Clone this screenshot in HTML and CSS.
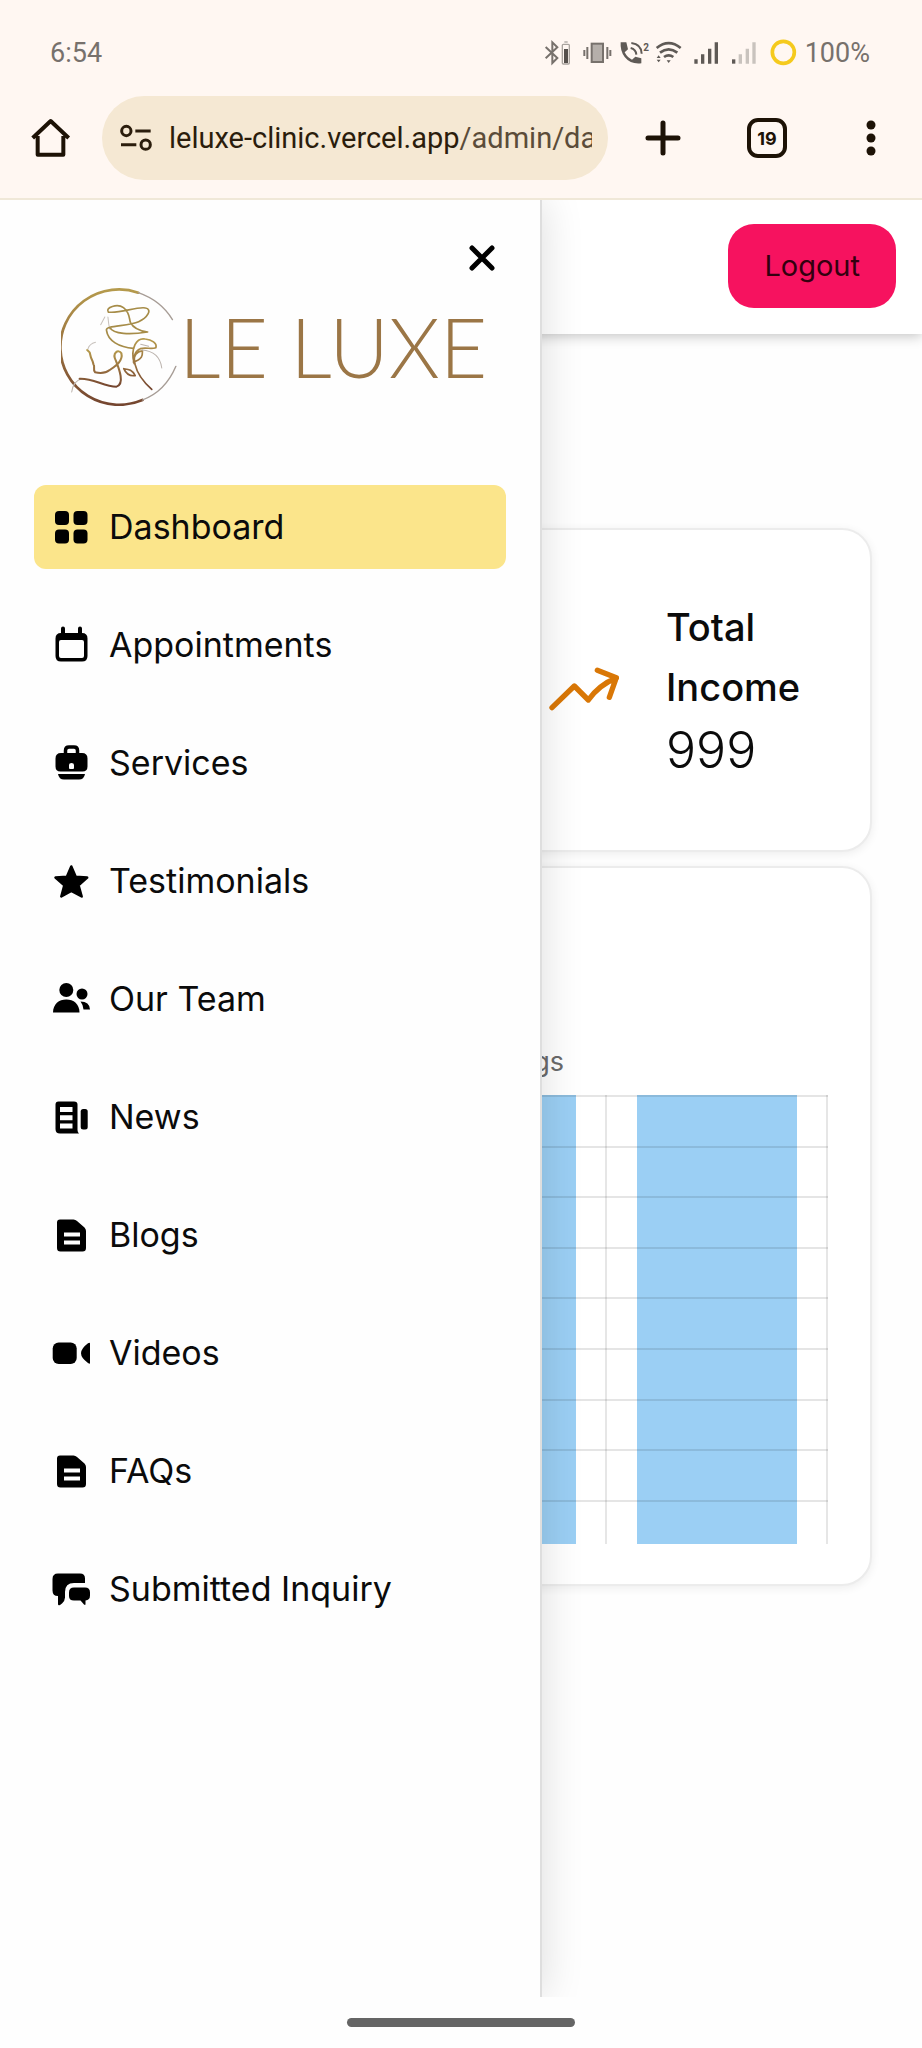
FILE: index.html
```html
<!DOCTYPE html>
<html lang="en">
<head>
<meta charset="utf-8">
<meta name="viewport" content="width=device-width, initial-scale=1">
<title>Le Luxe Clinic Admin</title>
<link rel="stylesheet" href="styles.css">
</head>
<body>
<div class="screen">
  <header class="chrome">
    <div class="status">
      <span class="clock">6:54</span>
      <div class="indicators">
        <svg width="32" height="28" viewBox="243 117 96 84" fill="none" stroke="#77716c" stroke-width="6"><path d="M251 141l35 33-15 15v-62l15 15-35 33"/><rect x="301" y="133" width="21" height="59" rx="3" stroke="#a9a39e" stroke-width="4"/><path d="M307 126h10" stroke="#c6c0bb"/><path d="M312 147v42" stroke="#55504c" stroke-width="12"/></svg>
        <svg width="36" height="28" viewBox="351 117 108 84" fill="none" stroke="#77716c" stroke-width="6"><rect x="389" y="131" width="34" height="55" fill="#b5afaa"/><path d="M376 141v36M367 150v18M436 141v36M445 150v18"/></svg>
        <svg width="32" height="28" viewBox="471 117 96 84"><path fill="#5f5a56" d="M476 127h17l5 21-10 9q8 16 22 22l10-9 18 5v15q-32 4-50-19-14-18-12-44z"/><path d="M506 144q16 4 17 20M508 129q30 3 31 32" fill="none" stroke="#5f5a56" stroke-width="6"/><text class="badge" x="544" y="153">2</text></svg>
        <svg width="30" height="28" viewBox="579 117 90 84" fill="none" stroke="#5f5a56" stroke-width="8"><path d="M584 144q36-29 72 0M594 158q26-20 52 0M606 171q14-10 28 0"/><path d="M614 181h12l-6 8z" fill="#5f5a56" stroke="none"/><path d="M584 174l6-8 6 8zM584 179l6 8 6-8z" fill="#5f5a56" stroke="none"/></svg>
        <svg width="34" height="28" viewBox="681 117 102 84" fill="none" stroke="#5f5a56" stroke-width="10"><path d="M702 178v13M722 163v28M743 146v45M763 127v64"/></svg>
        <svg width="36" height="28" viewBox="795 117 108 84" fill="none" stroke="#c9c3be" stroke-width="10"><path d="M815 178v13" stroke="#5f5a56"/><path d="M835 163v28M856 146v45M876 127v64"/></svg>
        <svg width="34" height="28" viewBox="915 117 102 84" fill="none"><circle cx="964" cy="157" r="33" stroke="#f5ca1d" stroke-width="11"/></svg>
        <span class="percent">100%</span>
      </div>
    </div>
    <div class="toolbar">
      <button class="tool" aria-label="Home"><svg width="40" height="40" viewBox="93 356 120 120" fill="none" stroke="#1d1206" stroke-width="12" stroke-linejoin="round"><path d="M113 410v56h77v-56M98 416l54-51 54 51"/></svg></button>
      <div class="address">
        <svg width="36" height="32" viewBox="352 366 108 96" fill="none" stroke="#2b1d0c" stroke-width="9"><circle cx="377" cy="393" r="14"/><path d="M404 393h46M361 434h46"/><circle cx="435" cy="434" r="14"/></svg>
        <span class="url">leluxe-clinic.vercel.app<span class="path">/admin/dashboard</span></span>
      </div>
      <div class="actions">
        <button class="tool" aria-label="New tab"><svg width="40" height="40" viewBox="0 0 40 40" stroke="#1d1206" stroke-width="5" stroke-linecap="round"><path d="M20 5v30M5 20h30"/></svg></button>
        <button class="tool tabs" aria-label="Open tabs">19</button>
        <button class="tool" aria-label="Menu"><svg width="40" height="40" viewBox="0 0 40 40" fill="#1d1206"><circle cx="20" cy="7" r="4.500"/><circle cx="20" cy="20" r="4.500"/><circle cx="20" cy="33" r="4.500"/></svg></button>
      </div>
    </div>
  </header>

  <div class="viewport">
    <div class="topbar"><button class="logout">Logout</button></div>
    <main class="content">
      <section class="card stat">
        <svg width="74" height="50" viewBox="87 470 222 150" fill="none" stroke="#d97706" stroke-width="16" stroke-linejoin="round" stroke-linecap="round"><path d="M99 598l67-65 42 42q33-46 84-66M235 486l57 22-21 59"/></svg>
        <div class="figures">
          <h2 class="stat-title">Total Income</h2>
          <p class="stat-value">999</p>
        </div>
      </section>
      <section class="card chart">
        <p class="legend">gs</p>
        <div class="plot">
          <div class="category"><div class="bar"></div></div>
          <div class="category"><div class="bar"></div></div>
          <div class="category"><div class="bar"></div></div>
        </div>
      </section>
    </main>

    <aside class="drawer">
      <button class="close" aria-label="Close menu"><svg width="32" height="32" viewBox="0 0 32 32" stroke="#000" stroke-width="5" stroke-linecap="round"><path d="M6 6l20 20M26 6L6 26"/></svg></button>
      <div class="brand">
        <svg class="emblem" width="118" height="120" viewBox="174 255 342 360" preserveAspectRatio="none" fill="none" stroke-linecap="round" stroke-linejoin="round">
          <defs><linearGradient id="gold" x1="0" y1="0" x2="0" y2="1"><stop offset="0" stop-color="#b59a4c"/><stop offset=".5" stop-color="#9a7240"/><stop offset="1" stop-color="#74452f"/></linearGradient></defs>
          <path d="M398 275A170 173 0 1 0 410 597" stroke="url(#gold)" stroke-width="8"/>
          <path d="M398 275q66 24 99 81M410 597q66-25 97-101" stroke="#a79d96" stroke-width="4"/>
          <path d="M205 573q4-34 30-40" stroke="#bdb5af" stroke-width="3"/>
          <path d="M228 533c40-2 70 24 107 24 24-8 8-52-2-78-12-24 8-36 16-22 6 24-20 40-34 50-12 10-27 11-42 7-8-9 1-17-5-24l-2-8-5-12-4-16-7-7" stroke="url(#gold)" stroke-width="6"/>
          <path d="M252 444q4-15 22-20M289 371l12-23M310 348q2 22 5 36" stroke="#c9c3be" stroke-width="3"/>
          <path d="M311 333c-10-14 27-26 44-13 18 14 16 30 20 44 10 20 28 26 50 29-50 8-100 7-109-13M311 333c30 6 86-18 108-12 21 4 5 30-20 41-32 15-99 10-93 27 4 30 36 50 78 53" stroke="#a68c48" stroke-width="5"/>
          <path d="M386 488c-12-48 8-79 32-74 19 2 35 13 31 26-14 6-28-2-45 3-30 13-22 72 33 122M384 483c28-9 26-22 26-34-18 4-24 14-26 34zM389 524c-8-18-18-19-33-21 7 17 18 23 33 21z" stroke="url(#gold)" stroke-width="5"/>
          <path d="M408 447q52 4 58 54M405 430l23 6" stroke="#bdb5af" stroke-width="3"/>
        </svg>
        <span class="wordmark">LE LUXE</span>
      </div>
      <nav class="menu">
        <a class="item active" href="#dashboard"><svg class="icon" viewBox="0 0 40 40"><rect x="4" y="4" width="14" height="14" rx="4"/><rect x="22.500" y="4" width="14" height="14" rx="4"/><rect x="4" y="22.500" width="14" height="14" rx="4"/><rect x="22.500" y="22.500" width="14" height="14" rx="4"/></svg>Dashboard</a>
        <a class="item" href="#appointments"><svg class="icon" viewBox="0 0 40 40"><path fill-rule="evenodd" d="M10 3.500a2 2 0 0 1 4 0V8h13V3.500a2 2 0 0 1 4 0V8q5.500 0 5.500 5.500v17.500q0 5.500-5.500 5.500H10q-5.500 0-5.500-5.500V13.500Q4.500 8 10 8zM8 17v14q0 2 2 2h21q2 0 2-2V17q0-2-2-2H10q-2 0-2 2z"/></svg>Appointments</a>
        <a class="item" href="#services"><svg class="icon" viewBox="0 0 40 40"><path d="M14.500 12V7.500q0-3.500 3.500-3.500h5q3.500 0 3.500 3.500V12" fill="none" stroke="#000" stroke-width="3.500"/><path fill-rule="evenodd" d="M10 10h21q5.500 0 5.500 5.500v8q0 5-5 5h-22q-5 0-5-5v-8Q4.500 10 10 10zM18 22v3q0 1 1 1h3q1 0 1-1v-3q0-2-2.500-2T18 22z"/><path d="M7 31h27q-1 5.500-6 5.500H13q-5 0-6-5.500z"/></svg>Services</a>
        <a class="item" href="#testimonials"><svg class="icon" viewBox="0 0 40 40"><path stroke="#000" stroke-width="2.500" stroke-linejoin="round" d="M20.300 5.500l4.400 10.300 11.500.8-8.700 7.600 3.200 11.300-10.400-5.700-10 5.700 3-11.300-8.800-7.600 11.400-.8z"/></svg>Testimonials</a>
        <a class="item" href="#team"><svg class="icon" viewBox="0 0 40 40"><circle cx="15.300" cy="11" r="7"/><path d="M2 33.500C2 25 8 20.500 15.300 20.500S28.500 25 28.500 33.500z"/><circle cx="31" cy="15" r="5.500"/><path d="M29.500 22.500q9 0 9.500 8h-6.500q-.5-5-3-8z"/></svg>Our Team</a>
        <a class="item" href="#news"><svg class="icon" viewBox="0 0 40 40"><path fill-rule="evenodd" d="M7.500 4.500H23q3.500 0 3.500 3V33q0 2 1.500 3.500H9q-4.500 0-4.500-4.500V7.500q0-3 3-3zM9 10v5h12.500v-5zM9 18.300v5h12.500v-5zM9 26.600v5h12.500v-5z"/><rect x="29.700" y="12" width="7" height="20.500" rx="2.500"/></svg>News</a>
        <a class="item" href="#blogs"><svg class="icon" viewBox="0 0 40 40"><path fill-rule="evenodd" d="M9 4.500h13.500q2 0 3.500 1.500l7.500 6.500q1.500 1.500 1.500 3.500V33q0 3.500-3.500 3.500H9.500Q6 36.500 6 33V7.500q0-3 3-3zM13 17.500v4h16v-4zM13 25.500v4h16v-4z"/></svg>Blogs</a>
        <a class="item" href="#videos"><svg class="icon" viewBox="0 0 40 40"><rect x="1.700" y="9.500" width="24" height="21.500" rx="6"/><path d="M39 10.500v19.500q0 1.500-2 0-7-5-7-9.700t7-10q2-1.300 2 .2z"/></svg>Videos</a>
        <a class="item" href="#faqs"><svg class="icon" viewBox="0 0 40 40"><path fill-rule="evenodd" d="M9 4.500h13.500q2 0 3.500 1.500l7.500 6.500q1.500 1.500 1.500 3.500V33q0 3.500-3.500 3.500H9.500Q6 36.500 6 33V7.500q0-3 3-3zM13 17.500v4h16v-4zM13 25.500v4h16v-4z"/></svg>FAQs</a>
        <a class="item" href="#inquiry"><svg class="icon" viewBox="0 0 40 40"><path d="M7 4.500h22q5 0 5 5V14H23q-9 0-9 9v5.500q0 3-3 6l-2 1.500q-2 1-2-1V27q-5.500 0-5.500-5.500V10q0-5.500 5.500-5.500z"/><path d="M23 18.500h11q5 0 5 5v3q0 4.500-4.500 5V35q0 1.500-1.500.5L29.500 31.500H23q-5 0-5-4.500v-3.500q0-5 5-5z"/></svg>Submitted Inquiry</a>
      </nav>
    </aside>
  </div>

  <div class="gesture"><div class="pill"></div></div>
</div>
</body>
</html>
```
FILE: styles.css
```css
* { box-sizing: border-box; }
body { margin: 0; font-family: Inter, "Liberation Sans", sans-serif; color: #0b0b0b; background: #fefefe; }
button { border: 0; padding: 0; background: none; font: inherit; color: inherit; }
svg { display: block; flex: none; }
h2, p { margin: 0; }
.screen { min-height: 100vh; display: flex; flex-direction: column; }

.chrome { background: #fff7f2; border-bottom: 2px solid #f0e8d8; font-family: Roboto, sans-serif; }
.status { display: flex; justify-content: space-between; align-items: center; height: 96px; padding: 10px 52px 0 50px; font-size: 27px; color: #77716c; }
.indicators { display: flex; align-items: center; gap: 4px; }
.badge { font: 700 30px Roboto, sans-serif; fill: #5f5a56; }
.toolbar { display: flex; align-items: center; padding: 0 31px 18px; }
.tool { width: 40px; height: 40px; flex: none; }
.address { flex: 1; min-width: 0; display: flex; align-items: center; gap: 15px; height: 84px; margin-left: 31px; padding: 0 16px; border-radius: 42px; background: #f5e8d3; color: #2b1d0c; }
.url { flex: 1; overflow: hidden; white-space: nowrap; font-size: 29px; line-height: 40px; }
.path { color: #5b4c39; }
.actions { display: flex; gap: 64px; margin-left: 35px; }
.tabs { border: 4px solid #1d1206; border-radius: 11px; font: 700 18px Inter, sans-serif; color: #1d1206; }

.viewport { position: relative; flex: 1; overflow: hidden; background: #fefefe; }
.topbar { display: flex; justify-content: flex-end; align-items: flex-start; height: 134px; padding: 24px 26px; background: #fff; box-shadow: 0 2px 12px rgba(0, 0, 0, .24); }
.logout { padding: 0 36px; border-radius: 26px; background: #f6125f; font-size: 29px; line-height: 84px; color: #33000f; }
.content { display: flex; flex-direction: column; gap: 14px; padding: 194px 50px 0; }
.card { border: 2px solid #ececec; border-radius: 30px; background: #fff; box-shadow: 0 2px 10px rgba(0, 0, 0, .07); }
.stat { display: flex; justify-content: flex-end; align-items: center; gap: 44px; height: 324px; padding-right: 40px; }
.figures { width: 164px; }
.stat-title { font-size: 38px; font-weight: 500; line-height: 60px; }
.stat-value { font-size: 50px; font-weight: 300; line-height: 66px; }
.chart { padding: 178px 42px 40px; }
.legend { text-align: right; padding-right: 264px; font-size: 27px; line-height: 32px; margin-bottom: 17px; color: #6a6a6a; }
.plot { position: relative; display: flex; justify-content: flex-end; height: 449px; }
.plot::after { content: ""; position: absolute; inset: 0; background: repeating-linear-gradient(rgba(0, 0, 0, .1) 0 2px, transparent 2px 11.27%); }
.category { width: 221px; display: flex; justify-content: center; border-right: 2px solid #e6e6e6; }
.bar { width: 160px; background: #9bcff4; }

.drawer { position: absolute; inset: 0 auto 0 0; width: 542px; padding: 38px 34px 0; border-right: 2px solid #dedede; background: #fefefe; box-shadow: 0 0 40px rgba(0, 0, 0, .14); }
.close { display: block; width: 32px; height: 32px; margin: 4px 8px 12px auto; }
.brand { display: flex; align-items: center; height: 120px; margin-left: 27px; }
.wordmark { font: 300 82px/100px Lato, sans-serif; color: #9b7646; white-space: nowrap; }
.menu { display: flex; flex-direction: column; gap: 34px; padding-top: 79px; }
.item { display: flex; align-items: center; gap: 18px; height: 84px; padding: 0 17px; border-radius: 12px; font-size: 34px; line-height: 42px; color: #0b0b0b; text-decoration: none; }
.active { background: #fbe58b; }
.icon { width: 40px; height: 40px; }

.gesture { height: 51px; padding-top: 21px; background: #fefefe; }
.pill { width: 228px; height: 9px; margin: 0 auto; border-radius: 5px; background: #656565; }
```
